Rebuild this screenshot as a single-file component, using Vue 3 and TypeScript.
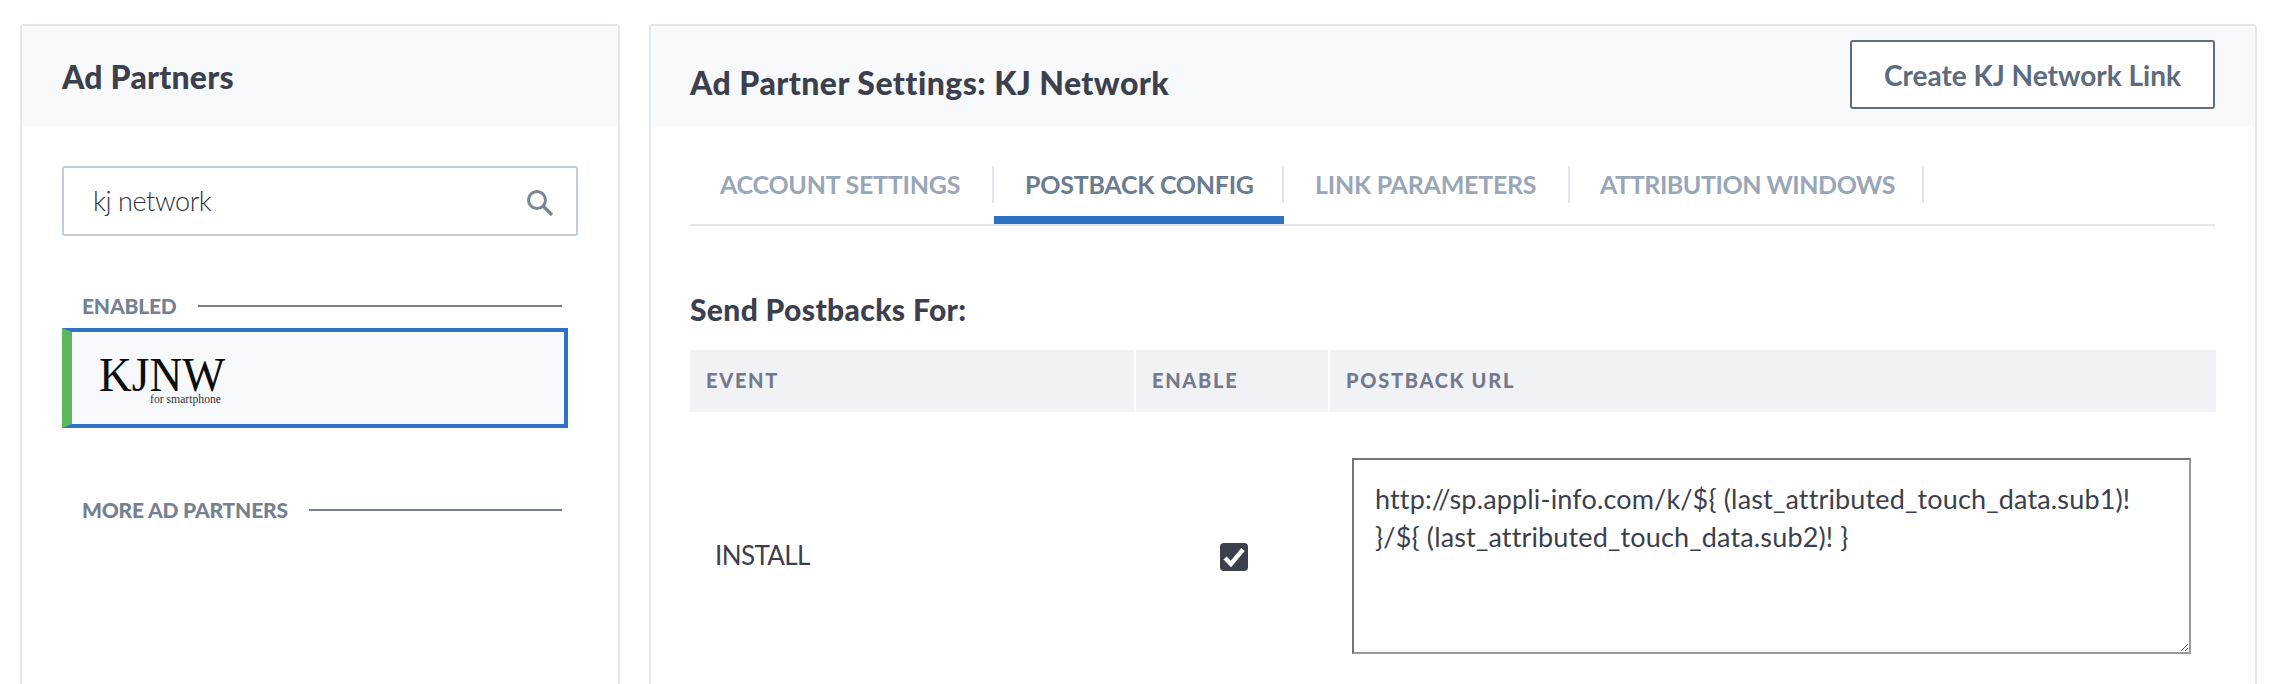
<template>
  <div class="page">
    <section class="card partners">
      <header class="card-head partners-head">
        <h2 class="card-title">Ad Partners</h2>
      </header>
      <div class="partners-body">
        <div class="search">
          <input class="search-input" type="text" :value="query" />
          <svg class="search-icon" width="28" height="28" viewBox="0 0 28 28" fill="none">
            <circle cx="11" cy="11" r="8.5" stroke="#7a8694" stroke-width="3" />
            <path d="M17 17l9 9" stroke="#7a8694" stroke-width="3.4" />
          </svg>
        </div>
        <div class="group-label enabled-label">
          <span>ENABLED</span>
          <i></i>
        </div>
        <div class="partner">
          <svg class="logo" width="140" height="76" viewBox="0 0 140 76">
            <text x="0" y="46" class="logo-main" textLength="126" lengthAdjust="spacingAndGlyphs">KJNW</text>
            <text x="51" y="58" class="logo-sub" textLength="71" lengthAdjust="spacingAndGlyphs">for smartphone</text>
          </svg>
        </div>
        <div class="group-label more-label">
          <span>MORE AD PARTNERS</span>
          <i></i>
        </div>
      </div>
    </section>

    <section class="card settings">
      <header class="card-head settings-head">
        <h2 class="card-title settings-title">Ad Partner Settings: KJ Network</h2>
        <button class="create-btn" type="button">Create KJ Network Link</button>
      </header>
      <div class="settings-body">
        <nav class="tabs">
          <div v-for="tab in tabs" :key="tab" class="tab" :class="{ active: tab === activeTab }">
            <span class="tab-label">{{ tab }}</span>
          </div>
        </nav>
        <h3 class="section-title">Send Postbacks For:</h3>
        <div class="table">
          <div class="th">EVENT</div>
          <div class="th">ENABLE</div>
          <div class="th">POSTBACK URL</div>
          <div class="event">INSTALL</div>
          <div class="enable">
            <span class="checkbox">
              <svg width="28" height="28" viewBox="0 0 28 28" fill="none">
                <path d="M5 15l6 6L23 6.500" stroke="#fff" stroke-width="4.400" />
              </svg>
            </span>
          </div>
          <div class="url">
            <textarea class="url-input" :value="postback"></textarea>
          </div>
        </div>
      </div>
    </section>
  </div>
</template>

<script setup lang="ts">
import { ref } from 'vue';

const query = ref('kj network');
const tabs: string[] = ['ACCOUNT SETTINGS', 'POSTBACK CONFIG', 'LINK PARAMETERS', 'ATTRIBUTION WINDOWS'];
const activeTab = ref('POSTBACK CONFIG');
const postback = ref('http://sp.appli-info.com/k/${ (last_attributed_touch_data.sub1)! }/${ (last_attributed_touch_data.sub2)! }');
</script>

<style>
html,
body {
  margin: 0;
  height: 684px;
  overflow: hidden;
  background: #fff;
}
</style>

<style scoped>
.page {
  display: flex;
  gap: 29px;
  padding: 24px 25px 0 20px;
  height: 660px;
  font-family: Lato, 'Liberation Sans', sans-serif;
  color: #3c3f4c;
}

.card {
  box-sizing: border-box;
  height: 700px;
  border: 2px solid #e2e7ec;
  border-radius: 4px;
  background: #fff;
}

.partners {
  width: 600px;
  flex: none;
}

.settings {
  width: 1608px;
  flex: none;
}

.card-head {
  box-sizing: border-box;
  height: 100px;
  background: #f8f9fb;
}

.partners-head {
  padding: 33px 40px 0;
}

.card-title {
  margin: 0;
  font-size: 32px;
  line-height: 36px;
  font-weight: 900;
  letter-spacing: 0.2px;
  color: #3c3f4c;
}

.settings-head {
  display: flex;
  justify-content: space-between;
  padding: 14px 40px 0 39px;
}

.settings-title {
  padding-top: 25px;
  letter-spacing: 0.45px;
}

.create-btn {
  box-sizing: border-box;
  width: 365px;
  height: 69px;
  border: 2px solid #5f6d7e;
  border-radius: 3px;
  background: #fff;
  font-family: inherit;
  font-size: 28px;
  font-weight: 700;
  color: #5c6b7d;
}

.partners-body {
  padding: 40px 42px 0 40px;
}

.search {
  position: relative;
  width: 516px;
}

.search-input {
  display: block;
  box-sizing: border-box;
  width: 100%;
  height: 70px;
  padding: 0 60px 2px 29px;
  border: 2px solid #c3ccd6;
  border-radius: 3px;
  outline: none;
  font-family: inherit;
  font-size: 27px;
  font-weight: 300;
  letter-spacing: -0.4px;
  color: #2f323e;
}

.search-icon {
  position: absolute;
  top: 23px;
  right: 24px;
}

.group-label {
  display: flex;
  align-items: center;
  gap: 21px;
  width: 480px;
  margin-left: 20px;
  font-size: 21px;
  line-height: 24px;
  font-weight: 900;
  letter-spacing: -0.2px;
  color: #758190;
}

.group-label i {
  flex: 1;
  height: 2px;
  background: #758190;
}

.enabled-label {
  margin-top: 58px;
}

.more-label {
  margin-top: 70px;
}

.partner {
  box-sizing: border-box;
  width: 506px;
  height: 100px;
  margin-top: 10px;
  padding-left: 27px;
  border: 4px solid #2f72c4;
  border-left: 10px solid #5cb85c;
  background: #f8f9fd;
}

.logo {
  display: block;
  margin-top: 13px;
}

.logo-main {
  font-family: 'Liberation Serif', serif;
  font-size: 48px;
  fill: #0c0c0c;
}

.logo-sub {
  font-family: 'Liberation Serif', serif;
  font-size: 13px;
  fill: #333;
}

.settings-body {
  padding: 40px 40px 0 39px;
}

.tabs {
  display: flex;
  border-bottom: 2px solid #e2e6ea;
}

.tab {
  box-sizing: border-box;
  height: 58px;
}

.tab:nth-child(1) {
  width: 304px;
}

.tab:nth-child(2) {
  width: 290px;
}

.tab:nth-child(3) {
  width: 286px;
}

.tab:nth-child(4) {
  width: 354px;
}

.tab-label {
  display: block;
  height: 37px;
  padding-left: 31px;
  border-right: 2px solid #e2e6ea;
  font-size: 25px;
  line-height: 37px;
  font-weight: 700;
  letter-spacing: -0.25px;
  color: #98a6b8;
  white-space: nowrap;
}

.tab:nth-child(1) .tab-label {
  padding-left: 30px;
}

.tab:nth-child(4) .tab-label {
  padding-left: 30px;
  letter-spacing: -0.45px;
}

.tab.active {
  background: linear-gradient(#2f72c4, #2f72c4) bottom / 100% 8px no-repeat;
}

.tab.active .tab-label {
  color: #6b7b90;
}

.section-title {
  margin: 68px 0 26px;
  font-size: 30px;
  line-height: 30px;
  font-weight: 900;
  letter-spacing: 0.35px;
  color: #3c3f4c;
}

.table {
  display: grid;
  grid-template-columns: 444px 192px 886px;
  gap: 0 2px;
}

.th {
  height: 62px;
  padding-left: 16px;
  background: #f1f2f6;
  font-size: 20px;
  line-height: 60px;
  font-weight: 900;
  letter-spacing: 1.7px;
  color: #747a8c;
}

.event {
  align-self: center;
  padding: 44px 0 0 25px;
  font-size: 26px;
  letter-spacing: -0.6px;
  color: #3c3f4c;
}

.enable {
  display: flex;
  justify-content: center;
  align-self: center;
  padding: 48px 0 0 3px;
}

.checkbox {
  display: block;
  width: 28px;
  height: 28px;
  border-radius: 4px;
  background: #3c3f4c;
}

.checkbox svg {
  display: block;
}

.url {
  padding: 46px 0 0 22px;
}

.url-input {
  display: block;
  box-sizing: border-box;
  width: 839px;
  height: 196px;
  padding: 20px 21px;
  font-family: inherit;
  font-size: 27px;
  line-height: 38px;
  letter-spacing: 0.15px;
  color: #3c3f4c;
  background: #fff;
  border-style: solid;
  border-width: 2px;
  border-color: #767676 #9a9a9a #9a9a9a #767676;
  outline: none;
}
</style>
